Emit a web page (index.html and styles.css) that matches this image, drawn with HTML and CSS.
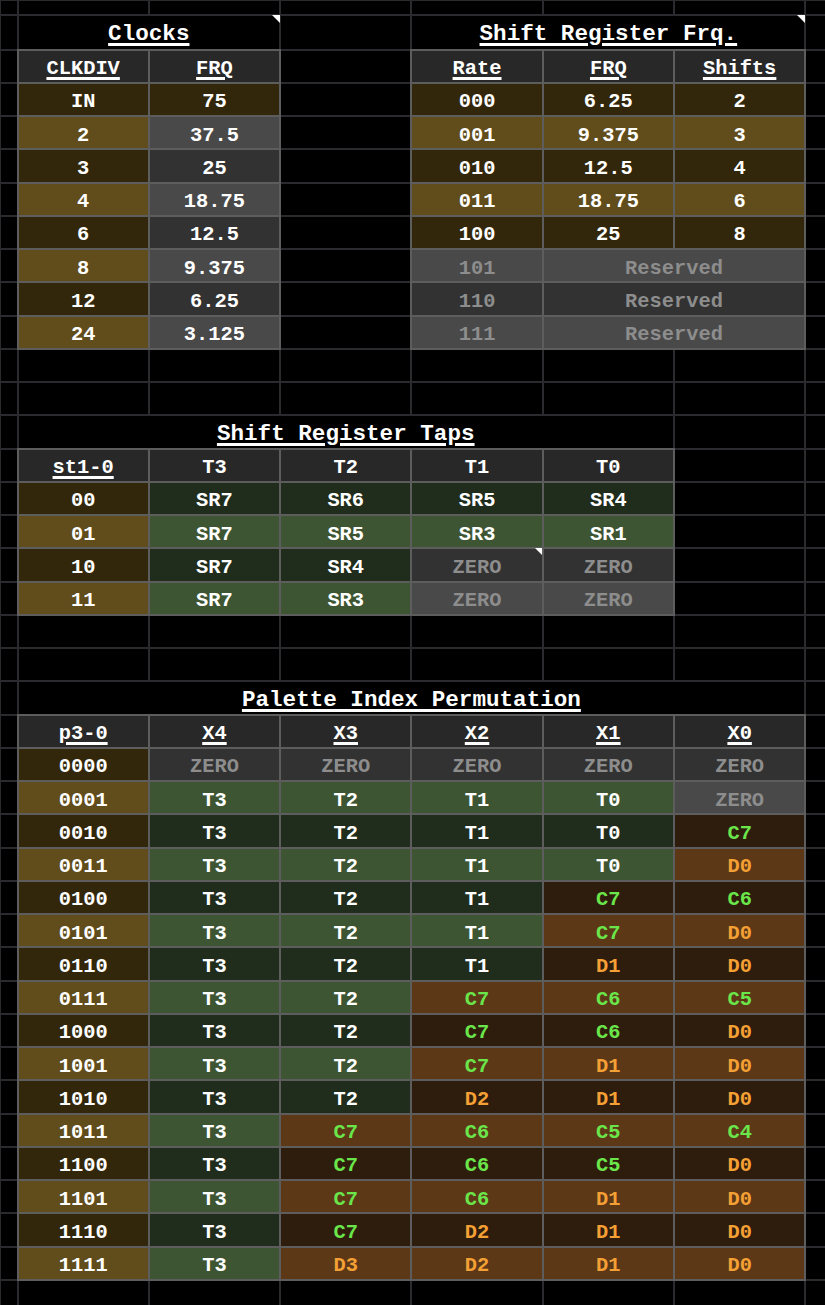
FILE: index.html
```html
<!DOCTYPE html>
<html lang="en">
<head>
<meta charset="utf-8">
<title>Clock tables</title>
<link rel="stylesheet" href="styles.css">
</head>
<body>
<div class="sheet">
  <!-- R1 -->
  <div></div><div></div><div></div><div></div><div></div><div></div><div></div><div></div>
  <!-- R2 titles -->
  <div></div><div class="t note s2"><span>Clocks</span></div><div></div><div class="t note s3"><span>Shift Register Frq.</span></div><div></div>
  <!-- R3 headers -->
  <div></div><div class="c h"><span class="u">CLKDIV</span></div><div class="c h"><span class="u">FRQ</span></div><div></div>
  <div class="c h"><span class="u">Rate</span></div><div class="c h"><span class="u">FRQ</span></div><div class="c h"><span class="u">Shifts</span></div><div></div>
  <!-- R4 -->
  <div></div><div class="c ya">IN</div><div class="c ya">75</div><div></div><div class="c ya">000</div><div class="c ya">6.25</div><div class="c ya">2</div><div></div>
  <div></div><div class="c yb">2</div><div class="c kb">37.5</div><div></div><div class="c yb">001</div><div class="c yb">9.375</div><div class="c yb">3</div><div></div>
  <div></div><div class="c ya">3</div><div class="c ka">25</div><div></div><div class="c ya">010</div><div class="c ya">12.5</div><div class="c ya">4</div><div></div>
  <div></div><div class="c yb">4</div><div class="c kb">18.75</div><div></div><div class="c yb">011</div><div class="c yb">18.75</div><div class="c yb">6</div><div></div>
  <div></div><div class="c ya">6</div><div class="c ka">12.5</div><div></div><div class="c ya">100</div><div class="c ya">25</div><div class="c ya">8</div><div></div>
  <div></div><div class="c yb">8</div><div class="c kb">9.375</div><div></div><div class="c kb dim">101</div><div class="c kb dim s2">Reserved</div><div></div>
  <div></div><div class="c ya">12</div><div class="c ka">6.25</div><div></div><div class="c ka dim">110</div><div class="c ka dim s2">Reserved</div><div></div>
  <div></div><div class="c yb">24</div><div class="c kb">3.125</div><div></div><div class="c kb dim">111</div><div class="c kb dim s2">Reserved</div><div></div>
  <!-- R12-13 -->
  <div></div><div></div><div></div><div></div><div></div><div></div><div></div><div></div>
  <div></div><div></div><div></div><div></div><div></div><div></div><div></div><div></div>
  <!-- R14 -->
  <div></div><div class="t s5"><span>Shift Register Taps</span></div><div></div><div></div>
  <div></div><div class="c h"><span class="u">st1-0</span></div><div class="c h">T3</div><div class="c h">T2</div><div class="c h">T1</div><div class="c h">T0</div><div></div><div></div>
  <div></div><div class="c ya">00</div><div class="c ga">SR7</div><div class="c ga">SR6</div><div class="c ga">SR5</div><div class="c ga">SR4</div><div></div><div></div>
  <div></div><div class="c yb">01</div><div class="c gb">SR7</div><div class="c gb">SR5</div><div class="c gb">SR3</div><div class="c gb">SR1</div><div></div><div></div>
  <div></div><div class="c ya">10</div><div class="c ga">SR7</div><div class="c ga">SR4</div><div class="c ka dim note">ZERO</div><div class="c ka dim">ZERO</div><div></div><div></div>
  <div></div><div class="c yb">11</div><div class="c gb">SR7</div><div class="c gb">SR3</div><div class="c kb dim">ZERO</div><div class="c kb dim">ZERO</div><div></div><div></div>
  <!-- R20-21 -->
  <div></div><div></div><div></div><div></div><div></div><div></div><div></div><div></div>
  <div></div><div></div><div></div><div></div><div></div><div></div><div></div><div></div>
  <!-- R22 -->
  <div></div><div class="t s6"><span>Palette Index Permutation</span></div><div></div>
  <div></div><div class="c h"><span class="u">p3-0</span></div><div class="c h"><span class="u">X4</span></div><div class="c h"><span class="u">X3</span></div><div class="c h"><span class="u">X2</span></div><div class="c h"><span class="u">X1</span></div><div class="c h"><span class="u">X0</span></div><div></div>
  <div></div><div class="c ya">0000</div><div class="c ka dim">ZERO</div><div class="c ka dim">ZERO</div><div class="c ka dim">ZERO</div><div class="c ka dim">ZERO</div><div class="c ka dim">ZERO</div><div></div>
  <div></div><div class="c yb">0001</div><div class="c gb">T3</div><div class="c gb">T2</div><div class="c gb">T1</div><div class="c gb">T0</div><div class="c kb dim">ZERO</div><div></div>
  <div></div><div class="c ya">0010</div><div class="c ga">T3</div><div class="c ga">T2</div><div class="c ga">T1</div><div class="c ga">T0</div><div class="c ba cg">C7</div><div></div>
  <div></div><div class="c yb">0011</div><div class="c gb">T3</div><div class="c gb">T2</div><div class="c gb">T1</div><div class="c gb">T0</div><div class="c bb co">D0</div><div></div>
  <div></div><div class="c ya">0100</div><div class="c ga">T3</div><div class="c ga">T2</div><div class="c ga">T1</div><div class="c ba cg">C7</div><div class="c ba cg">C6</div><div></div>
  <div></div><div class="c yb">0101</div><div class="c gb">T3</div><div class="c gb">T2</div><div class="c gb">T1</div><div class="c bb cg">C7</div><div class="c bb co">D0</div><div></div>
  <div></div><div class="c ya">0110</div><div class="c ga">T3</div><div class="c ga">T2</div><div class="c ga">T1</div><div class="c ba co">D1</div><div class="c ba co">D0</div><div></div>
  <div></div><div class="c yb">0111</div><div class="c gb">T3</div><div class="c gb">T2</div><div class="c bb cg">C7</div><div class="c bb cg">C6</div><div class="c bb cg">C5</div><div></div>
  <div></div><div class="c ya">1000</div><div class="c ga">T3</div><div class="c ga">T2</div><div class="c ba cg">C7</div><div class="c ba cg">C6</div><div class="c ba co">D0</div><div></div>
  <div></div><div class="c yb">1001</div><div class="c gb">T3</div><div class="c gb">T2</div><div class="c bb cg">C7</div><div class="c bb co">D1</div><div class="c bb co">D0</div><div></div>
  <div></div><div class="c ya">1010</div><div class="c ga">T3</div><div class="c ga">T2</div><div class="c ba co">D2</div><div class="c ba co">D1</div><div class="c ba co">D0</div><div></div>
  <div></div><div class="c yb">1011</div><div class="c gb">T3</div><div class="c bb cg">C7</div><div class="c bb cg">C6</div><div class="c bb cg">C5</div><div class="c bb cg">C4</div><div></div>
  <div></div><div class="c ya">1100</div><div class="c ga">T3</div><div class="c ba cg">C7</div><div class="c ba cg">C6</div><div class="c ba cg">C5</div><div class="c ba co">D0</div><div></div>
  <div></div><div class="c yb">1101</div><div class="c gb">T3</div><div class="c bb cg">C7</div><div class="c bb cg">C6</div><div class="c bb co">D1</div><div class="c bb co">D0</div><div></div>
  <div></div><div class="c ya">1110</div><div class="c ga">T3</div><div class="c ba cg">C7</div><div class="c ba co">D2</div><div class="c ba co">D1</div><div class="c ba co">D0</div><div></div>
  <div></div><div class="c yb">1111</div><div class="c gb">T3</div><div class="c bb co">D3</div><div class="c bb co">D2</div><div class="c bb co">D1</div><div class="c bb co">D0</div><div></div>
  <!-- R40 -->
  <div></div><div></div><div></div><div></div><div></div><div></div><div></div><div></div>
</div>
</body>
</html>
```
FILE: styles.css
```css
html, body {
  margin: 0;
  padding: 0;
  background: #000;
  overflow: hidden;
  width: 825px;
  height: 1305px;
}

.sheet {
  display: grid;
  grid-template-columns: 17.5px repeat(6, 131.3px) 60px;
  grid-template-rows: 14.5px 35.2px repeat(37, 33.26px) 60px;
  font-family: "Liberation Mono", "Courier New", monospace;
  font-weight: bold;
  font-size: 20.4px;
  color: #fff;
}

.sheet > div {
  display: flex;
  align-items: center;
  justify-content: center;
  box-sizing: border-box;
  padding-top: 4.5px;
  white-space: pre;
  outline: 2px solid #2b2b2f;
  outline-offset: -1px;
  min-width: 0;
  min-height: 0;
}

.sheet > .c {
  position: relative;
  outline-color: #5d5d5d;
}

.sheet > .t {
  position: relative;
  font-size: 22.6px;
  padding-top: 3px;
}

.t span {
  text-decoration: underline;
  text-decoration-thickness: 3px;
  text-underline-offset: 3px;
}

.u {
  text-decoration: underline;
  text-decoration-thickness: 2.5px;
  text-underline-offset: 3px;
}

.s2 { grid-column: span 2; }
.s3 { grid-column: span 3; }
.s5 { grid-column: span 5; }
.s6 { grid-column: span 6; }

.h  { background: #282828; }
.ya { background: #33270b; }
.yb { background: #614c1b; }
.ka { background: #323232; }
.kb { background: #494949; }
.ga { background: #202c1c; }
.gb { background: #3d5532; }
.ba { background: #2e1c0c; }
.bb { background: #5c3817; }

.dim { color: #8d8d8d; }
.cg  { color: #6ae64b; }
.co  { color: #f4a035; }

.note::after {
  content: "";
  position: absolute;
  top: 0;
  right: 0;
  width: 0;
  height: 0;
  border-top: 8px solid #fff;
  border-left: 8px solid transparent;
}
```
